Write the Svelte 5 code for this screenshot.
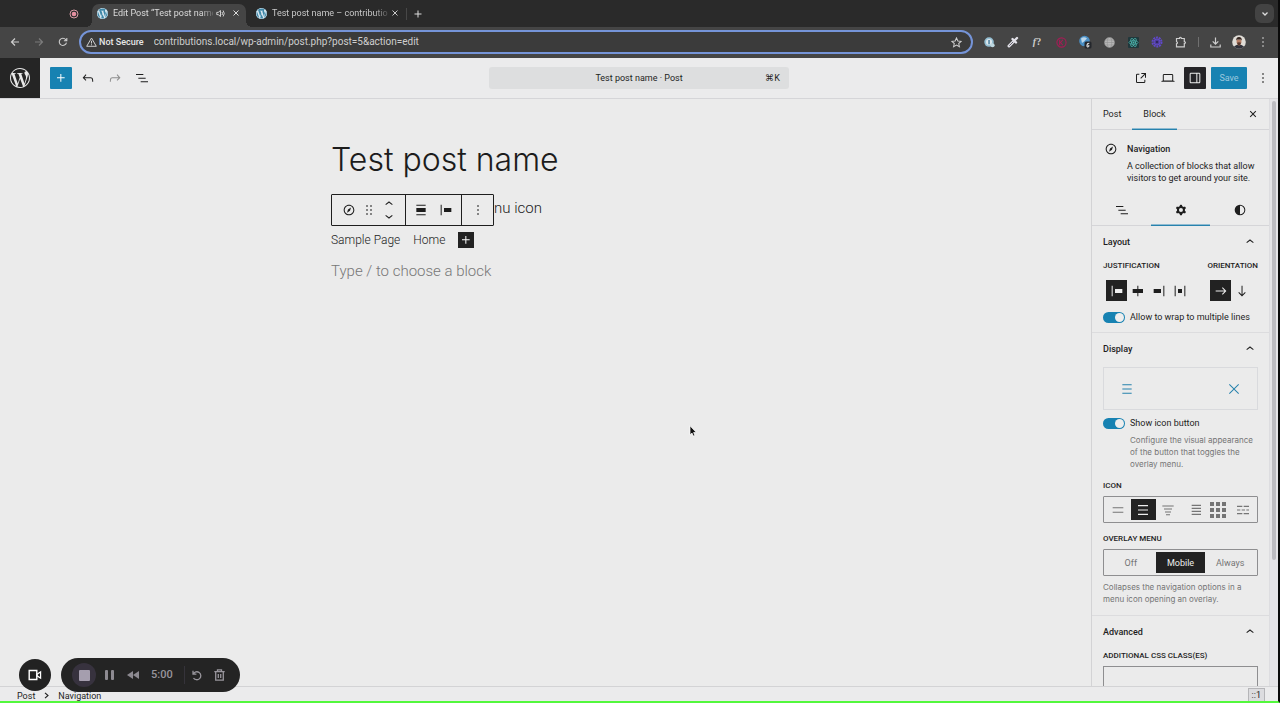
<script>
  const icons = {
    plus: 'M11 12.5V17.5H12.5V12.5H17.5V11H12.5V6H11V11H6V12.5H11Z',
    undo: 'M18.3 11.7c-.6-.6-1.4-.9-2.3-.9H6.7l2.9-3.3-1.1-1-4.5 5L8.5 16l1-1-2.7-2.7H16c.5 0 .9.2 1.3.5 1 1 1 3.4 1 4.5v.3h1.5v-.2c0-1.5 0-4.3-1.5-5.7z',
    redo: 'M15.6 6.5l-1.1 1 2.9 3.3H8c-.9 0-1.7.3-2.3.9-1.4 1.5-1.4 4.2-1.4 5.6v.2h1.5v-.3c0-1.1 0-3.5 1-4.5.3-.3.7-.5 1.3-.5h9.2L14.5 15l1.1 1.1 4.6-4.6-4.6-5z',
    list: 'M3 6h11v1.5H3V6Zm3.5 5.5h11V13h-11v-1.5ZM21 17H10v1.5h11V17Z',
    external: 'M19.5 4.5h-7V6h4.44l-5.97 5.97 1.06 1.06L18 7.06v4.44h1.5v-7Zm-13 1a2 2 0 0 0-2 2v10a2 2 0 0 0 2 2h10a2 2 0 0 0 2-2v-3H17v3a.5.5 0 0 1-.5.5h-10a.5.5 0 0 1-.5-.5v-10a.5.5 0 0 1 .5-.5h3V5.5h-3Z',
    desktop: 'M20.5 16h-.7V8c0-1.1-.9-2-2-2H6.2c-1.1 0-2 .9-2 2v8h-.7c-.8 0-1.5.7-1.5 1.5h20c0-.8-.7-1.5-1.5-1.5zM5.7 8c0-.3.2-.5.5-.5h11.6c.3 0 .5.2.5.5v7.6H5.7V8z',
    drawer: 'M18 4H6c-1.1 0-2 .9-2 2v12c0 1.1.9 2 2 2h12c1.1 0 2-.9 2-2V6c0-1.1-.9-2-2-2zm-4 14.5H6c-.3 0-.5-.2-.5-.5V6c0-.3.2-.5.5-.5h8v13zm4.5-.5c0 .3-.2.5-.5.5h-2.5v-13H18c.3 0 .5.2.5.5v12z',
    more: 'M13 19h-2v-2h2v2zm0-6h-2v-2h2v2zm0-6h-2V5h2v2z',
    navigation: 'M12 4c-4.4 0-8 3.6-8 8s3.6 8 8 8 8-3.6 8-8-3.6-8-8-8zm0 14.5c-3.6 0-6.5-2.9-6.5-6.5S8.4 5.5 12 5.5s6.5 2.9 6.5 6.5-2.9 6.5-6.5 6.5zM9 16l4.5-3L15 8.4l-4.5 3L9 16z',
    drag: 'M8 7h2V5H8v2zm0 6h2v-2H8v2zm0 6h2v-2H8v2zm6-14v2h2V5h-2zm0 8h2v-2h-2v2zm0 6h2v-2h-2v2z',
    up: 'M6.5 12.4L12 8l5.5 4.4-.9 1.2L12 10l-4.5 3.6-1-1.2z',
    down: 'M17.5 11.6L12 16l-5.5-4.4.9-1.2L12 14l4.5-3.6 1 1.2z',
    align: 'M19 5.5H5V4h14v1.5ZM19 20H5v-1.5h14V20ZM5 9h14v6H5V9Z',
    left: 'M9 9v6h11V9H9zM4 20h1.5V4H4v16z',
    center: 'M12.5 15v5H11v-5H4V9h7V4h1.5v5h7v6h-7Z',
    right: 'M4 15h11V9H4v6zM18.5 4v16H20V4h-1.5z',
    between: 'M9 15h6V9H9v6zm-5 5h1.5V4H4v16zM18.5 4v16H20V4h-1.5z',
    arrowRight: 'm14.5 6.5-1 1 3.7 3.7H4v1.6h13.2l-3.7 3.7 1 1 5.6-5.5z',
    arrowDown: 'm16.5 13.5-3.7 3.7V4h-1.5v13.2l-3.8-3.7-1 1 5.5 5.6 5.5-5.6z',
    closeSmall: 'M12 13.06l3.712 3.713 1.061-1.06L13.061 12l3.712-3.712-1.06-1.06L12 10.938 8.288 7.227l-1.061 1.06L10.939 12l-3.712 3.712 1.06 1.061L12 13.061z',
    close: 'm13.06 12 6.47-6.47-1.06-1.06L12 10.94 5.53 4.47 4.47 5.53 10.94 12l-6.47 6.47 1.06 1.06L12 13.06l6.47 6.47 1.06-1.06L13.06 12Z',
    cog: 'M10.289 4.836A1 1 0 0111.275 4h1.306a1 1 0 01.987.836l.244 1.466c.787.26 1.503.679 2.108 1.218l1.393-.522a1 1 0 011.216.437l.653 1.13a1 1 0 01-.23 1.273l-1.148.944a6.025 6.025 0 010 2.435l1.149.946a1 1 0 01.23 1.272l-.653 1.13a1 1 0 01-1.216.437l-1.394-.522c-.605.54-1.32.958-2.108 1.218l-.244 1.466a1 1 0 01-.987.836h-1.306a1 1 0 01-.986-.836l-.244-1.466a5.995 5.995 0 01-2.108-1.218l-1.394.522a1 1 0 01-1.217-.436l-.653-1.131a1 1 0 01.23-1.272l1.149-.946a6.026 6.026 0 010-2.435l-1.148-.944a1 1 0 01-.23-1.272l.653-1.131a1 1 0 011.217-.437l1.393.522a5.994 5.994 0 012.108-1.218l.244-1.466zM14.929 12a3 3 0 11-6 0 3 3 0 016 0z',
    styles: 'M20 12a8 8 0 1 1-16 0 8 8 0 0 1 16 0Zm-1.5 0a6.5 6.5 0 0 1-6.5 6.5v-13a6.5 6.5 0 0 1 6.5 6.5Z',
    menu: 'M5 5v1.5h14V5H5zm0 7.8h14v-1.5H5v1.5zM5 19h14v-1.5H5V19z',
    wordpress: 'M21.469 6.825c.84 1.537 1.318 3.3 1.318 5.175 0 3.979-2.156 7.456-5.363 9.325l3.295-9.527c.615-1.54.82-2.771.82-3.864 0-.405-.026-.78-.07-1.11m-7.981.105c.647-.03 1.232-.105 1.232-.105.582-.075.514-.93-.067-.899 0 0-1.755.135-2.88.135-1.064 0-2.85-.15-2.85-.15-.585-.03-.661.855-.075.885 0 0 .54.061 1.125.09l1.68 4.605-2.37 7.08L5.354 6.9c.649-.03 1.234-.1 1.234-.1.585-.075.516-.93-.065-.896 0 0-1.746.138-2.874.138-.2 0-.438-.008-.69-.015C4.911 3.15 8.235 1.215 12 1.215c2.809 0 5.365 1.072 7.286 2.833-.046-.003-.091-.009-.141-.009-1.06 0-1.812.923-1.812 1.914 0 .89.513 1.643 1.06 2.531.411.72.89 1.643.89 2.977 0 .915-.354 1.994-.821 3.479l-1.075 3.585-3.9-11.61.001.014zM12 22.784c-1.059 0-2.081-.153-3.048-.437l3.237-9.406 3.315 9.087c.024.053.05.101.078.149-1.12.393-2.325.609-3.582.609M1.211 12c0-1.564.336-3.05.935-4.39L7.29 21.709C3.694 19.96 1.212 16.271 1.211 12M12 0C5.385 0 0 5.385 0 12s5.385 12 12 12 12-5.385 12-12S18.615 0 12 0'
  };

  const menuIcons = [
    { name: 'Two lines', d: 'M4 8.5h16M4 15.5h16', w: 1.6 },
    { name: 'Three lines', d: 'M4.5 5.5h15M4.5 12h15M4.5 18.5h15', w: 1.7 },
    { name: 'Tapered lines', d: 'M3.5 6h17M6 10.5h12M7.5 15h9M9 19h6', w: 1.6 },
    { name: 'Four lines', d: 'M10 5h14M10 9.5h14M10 14h14M10 18.5h14', w: 2 },
    { name: 'Grid', d: 'M0 3h6M9 3h6M18 3h6M0 12h6M9 12h6M18 12h6M0 21h6M9 21h6M18 21h6', w: 6 },
    { name: 'Staggered lines', d: 'M3 6.5h8M13 6.5h8M3 12h5M10 12h5M17 12h4M3 17.5h8M13 17.5h8', w: 1.7 }
  ];
  const justifications = ['left', 'center', 'right', 'between'];
  const overlays = ['Off', 'Mobile', 'Always'];

  let justification = $state('left');
  let orientation = $state('arrowRight');
  let menuIcon = $state('Three lines');
  let overlay = $state('Mobile');
  let wrap = $state(true);
  let showIcon = $state(true);
  let url = $state('contributions.local/wp-admin/post.php?post=5&action=edit');
</script>

{#snippet icon(name, size = 16)}
  <svg width={size} height={size} viewBox="0 0 24 24" fill="currentColor" fill-rule="evenodd" aria-hidden="true"><path d={icons[name]} /></svg>
{/snippet}

{#snippet favicon()}
  <svg width="11" height="11" viewBox="0 0 24 24" aria-hidden="true"><circle cx="12" cy="12" r="12" fill="#3f88a8" /><path d={icons.wordpress} fill="#dceaf2" /></svg>
{/snippet}

<div class="window">
  <header class="tabstrip">
    <svg class="record" width="10" height="10" viewBox="0 0 10 10" aria-hidden="true"><circle cx="5" cy="5" r="4" fill="none" stroke="#d99aa6" /><circle cx="5" cy="5" r="2.300" fill="#e58fa0" /></svg>
    <div class="tab active">
      {@render favicon()}
      <span class="tab-title">Edit Post “Test post name</span>
      <button aria-label="Mute tab"><svg width="9" height="9" viewBox="0 0 12 12" fill="none" stroke="currentColor" stroke-width="1.200"><path d="M1 4.500h2L6 2v8L3 7.500H1z" /><path d="M8 4q1.500 2 0 4M9.500 2q3 4 0 8" /></svg></button>
      <button aria-label="Close tab"><svg width="6" height="6" viewBox="0 0 6 6" stroke="currentColor"><path d="M.5.500l5 5M5.500.500l-5 5" /></svg></button>
    </div>
    <div class="tab second">
      {@render favicon()}
      <span class="tab-title">Test post name – contributio</span>
      <button aria-label="Close tab"><svg width="6" height="6" viewBox="0 0 6 6" stroke="currentColor"><path d="M.5.500l5 5M5.500.500l-5 5" /></svg></button>
    </div>
    <span class="tab-sep"></span>
    <button class="new-tab" aria-label="New tab"><svg width="8" height="8" viewBox="0 0 8 8" stroke="currentColor"><path d="M4 .5v7M.5 4h7" /></svg></button>
    <button class="tab-search" aria-label="Search tabs"><svg width="8" height="8" viewBox="0 0 8 8" fill="none" stroke="currentColor" stroke-width="1.300"><path d="M1.500 2.500L4 5l2.500-2.500" /></svg></button>
  </header>

  <div class="browserbar">
    <button class="slot" aria-label="Back"><svg width="10" height="10" viewBox="0 0 10 10" fill="none" stroke="currentColor" stroke-width="1.200"><path d="M9 5H1.500M5 1.500L1.500 5 5 8.500" /></svg></button>
    <button class="slot dim" aria-label="Forward"><svg width="10" height="10" viewBox="0 0 10 10" fill="none" stroke="currentColor" stroke-width="1.200"><path d="M1 5h7.500M5 1.500L8.500 5 5 8.500" /></svg></button>
    <button class="slot" aria-label="Reload"><svg width="10" height="10" viewBox="0 0 11 11" fill="none" stroke="currentColor" stroke-width="1.200"><path d="M9.300 6.200A4 4 0 1 1 8.500 2.800L9.600 4M9.700 1v3.200H6.500" /></svg></button>
    <div class="address">
      <svg width="11" height="10" viewBox="0 0 11 10" fill="none" stroke="currentColor"><path d="M5.500 1L10.300 9.300H.7zM5.500 3.800v2.700M5.500 7.300v1" /></svg>
      <span class="insecure">Not Secure</span>
      <input aria-label="Address" bind:value={url} />
      <svg width="11" height="11" viewBox="0 0 12 12" fill="none" stroke="currentColor" stroke-width="1.100"><path d="M6 1l1.500 3.300 3.600.4-2.700 2.400.8 3.500L6 8.800l-3.200 1.800.8-3.500L.9 4.700l3.600-.4z" /></svg>
    </div>
    <button class="slot" aria-label="Password manager"><svg width="11" height="11" viewBox="0 0 12 12"><circle cx="5.500" cy="5.500" r="5.200" fill="#94bfd3" /><circle cx="5.500" cy="5.500" r="3.300" fill="#dce7ec" /><path d="M5.500 3.300v4.500" stroke="#397397" stroke-width="1.500" /><circle cx="9.300" cy="9" r="2.300" fill="#bed7df" /></svg></button>
    <button class="slot" aria-label="Color picker"><svg width="12" height="12" viewBox="0 0 12 12"><path d="M2 10l5-5" stroke="#e2e1e8" stroke-width="3" stroke-linecap="round" /><path d="M2.300 9.700l4-4" stroke="#62606a" /><path d="M5.500 3l3.500 3.500M8 4l2-2" stroke="#e2e1e8" stroke-width="2.400" stroke-linecap="round" /></svg></button>
    <button class="slot fonts" aria-label="Font finder"><i>f</i>?</button>
    <button class="slot" aria-label="Blocker"><svg width="11" height="11" viewBox="0 0 12 12" fill="none" stroke="#a41c55" stroke-width="1.200"><circle cx="6" cy="6" r="5" /><path d="M4 3v6M7.500 3L5 6l2.500 3" /></svg></button>
    <button class="slot" aria-label="Notifications"><svg width="14" height="14" viewBox="0 0 14 14"><circle cx="6.500" cy="6" r="5.300" fill="#4a8fc5" /><path d="M3 3.500Q6 1 9 3.500L6 6.500 4 8z" fill="#bcd6e9" /><rect x="6.500" y="6.500" width="7" height="7" rx="1.500" fill="#24272c" /><path d="M11.300 8.300q-2.400-.6-2.400 2t1.200 1.700 1.200-1.200-2.200-.9" fill="none" stroke="#fff" stroke-width=".9" /></svg></button>
    <button class="slot" aria-label="Globe"><svg width="11" height="11" viewBox="0 0 12 12" fill="none" stroke="#8d8d8d" stroke-width=".6"><circle cx="6" cy="6" r="5.500" fill="#b8b8b8" /><ellipse cx="6" cy="6" rx="2.500" ry="5.500" /><path d="M.5 6h11M1.500 3.300h9M1.500 8.700h9" /></svg></button>
    <button class="slot" aria-label="React tools"><svg width="11" height="11" viewBox="0 0 12 12" fill="none" stroke="#4cb5ad" stroke-width=".8"><rect width="12" height="12" rx="1" fill="#20383c" stroke="none" /><ellipse cx="6" cy="6" rx="5" ry="2" /><ellipse cx="6" cy="6" rx="5" ry="2" transform="rotate(60 6 6)" /><ellipse cx="6" cy="6" rx="5" ry="2" transform="rotate(120 6 6)" /><circle cx="6" cy="6" r=".7" fill="#4cb5ad" /></svg></button>
    <button class="slot" aria-label="Gear"><svg width="12" height="12" viewBox="0 0 12 12" fill="none" stroke="#6048c8"><circle cx="6" cy="6" r="4.500" stroke-width="2" stroke-dasharray="2 .800" /><circle cx="6" cy="6" r="3" fill="#5240a0" /><circle cx="6" cy="6" r="1.300" fill="#30275e" stroke="none" /></svg></button>
    <button class="slot" aria-label="Extensions"><svg width="12" height="12" viewBox="0 0 12 12" fill="none" stroke="currentColor" stroke-width="1.200"><path d="M1.500 2.500h3v-.6q.9-1.300 1.800 0v.6h3v3.200h.5q1.300.9 0 1.800h-.5v3.300H1.500V7.700q2-.9 0-2.300z" /></svg></button>
    <span class="bar-sep"></span>
    <button class="slot" aria-label="Downloads"><svg width="11" height="11" viewBox="0 0 11 11" fill="none" stroke="currentColor" stroke-width="1.200"><path d="M5.500.500v6.500M2.700 4.300l2.800 2.800 2.800-2.800M.8 7.500V10h9.400V7.500" /></svg></button>
    <button class="slot" aria-label="Profile"><svg width="14" height="14" viewBox="0 0 14 14"><circle cx="7" cy="7" r="6.800" fill="#dfdcd6" /><path d="M2 11.500Q7 7.500 12 11.500A6.800 6.800 0 0 1 2 11.500" fill="#30313a" /><path d="M4.600 4.500h4.800v3Q8.500 10.500 7 10.500T4.600 7.500z" fill="#b77f66" /><path d="M4.200 5.500Q4 2 7 2t2.800 3.500L9 4.500H5z" fill="#33251f" /><path d="M5 7.800q2-1 4 0-.5 2.500-2 2.500t-2-2.500" fill="#56382d" /></svg></button>
    <button class="slot" aria-label="Browser menu">{@render icon('more', 16)}</button>
  </div>

  <div class="editor-header">
    <a class="wp-logo" href="#home" aria-label="View posts">{@render icon('wordpress', 20)}</a>
    <div class="tools">
      <button class="tool primary" aria-label="Block inserter">{@render icon('plus')}</button>
      <button class="tool" aria-label="Undo">{@render icon('undo')}</button>
      <button class="tool dim" aria-label="Redo">{@render icon('redo')}</button>
      <button class="tool" aria-label="Document overview">{@render icon('list')}</button>
    </div>
    <button class="command"><span>Test post name · Post</span><kbd>⌘K</kbd></button>
    <div class="tools end">
      <button class="tool" aria-label="View post">{@render icon('external')}</button>
      <button class="tool" aria-label="Preview">{@render icon('desktop')}</button>
      <button class="tool dark" aria-label="Settings">{@render icon('drawer')}</button>
      <button class="save">Save</button>
      <button class="tool" aria-label="Options">{@render icon('more')}</button>
    </div>
  </div>

  <div class="body">
    <main>
      <article>
        <h1>Test post name</h1>
        <div class="para-row">
          <div class="block-toolbar" role="toolbar" aria-label="Block tools">
            <div class="group">
              <button aria-label="Navigation">{@render icon('navigation')}</button>
              <button aria-label="Drag">{@render icon('drag')}</button>
              <span class="movers">
                <button aria-label="Move up">{@render icon('up')}</button>
                <button aria-label="Move down">{@render icon('down')}</button>
              </span>
            </div>
            <div class="group two">
              <button aria-label="Align">{@render icon('align')}</button>
              <button aria-label="Justify items">{@render icon('left')}</button>
            </div>
            <div class="group one"><button aria-label="Options">{@render icon('more')}</button></div>
          </div>
          <p>nu icon</p>
        </div>
        <nav>
          <a href="#sample">Sample Page</a>
          <a href="#home">Home</a>
          <button aria-label="Add block">{@render icon('plus')}</button>
        </nav>
        <p class="placeholder">Type / to choose a block</p>
      </article>
      <svg class="cursor" width="8" height="12" viewBox="0 0 8 12" aria-hidden="true"><path d="M1 .8v9l2-1.700 1.400 3 1.500-.7L4.600 7.500H7.300z" fill="#111" stroke="#fff" stroke-width=".7" /></svg>
    </main>

    <aside>
      <div class="sidebar">
        <div class="side-tabs">
          <button>Post</button>
          <button class="current">Block</button>
          <button class="side-close" aria-label="Close settings">{@render icon('closeSmall')}</button>
        </div>
        <div class="card">
          {@render icon('navigation')}
          <div>
            <h2>Navigation</h2>
            <p>A collection of blocks that allow visitors to get around your site.</p>
          </div>
        </div>
        <div class="view-tabs">
          <button aria-label="List view">{@render icon('list')}</button>
          <button class="current" aria-label="Settings">{@render icon('cog')}</button>
          <button aria-label="Styles">{@render icon('styles')}</button>
        </div>

        <section>
          <h2><button class="panel-title">Layout {@render icon('up')}</button></h2>
          <div class="split">
            <fieldset>
              <legend>Justification</legend>
              <div class="choices">
                {#each justifications as j}
                  <button class:picked={justification === j} aria-label={j} onclick={() => (justification = j)}>{@render icon(j)}</button>
                {/each}
              </div>
            </fieldset>
            <fieldset>
              <legend>Orientation</legend>
              <div class="choices">
                {#each ['arrowRight', 'arrowDown'] as o}
                  <button class:picked={orientation === o} aria-label={o} onclick={() => (orientation = o)}>{@render icon(o)}</button>
                {/each}
              </div>
            </fieldset>
          </div>
          <label class="toggle"><input type="checkbox" bind:checked={wrap} />Allow to wrap to multiple lines</label>
        </section>

        <section>
          <h2><button class="panel-title">Display {@render icon('up')}</button></h2>
          <button class="preview" aria-label="Overlay menu controls">{@render icon('menu')}{@render icon('close')}</button>
          <label class="toggle"><input type="checkbox" bind:checked={showIcon} />Show icon button</label>
          <p class="help indent">Configure the visual appearance of the button that toggles the overlay menu.</p>
          <fieldset class="stack">
            <legend>Icon</legend>
            <div class="segments">
              {#each menuIcons as m}
                <button class:picked={menuIcon === m.name} aria-label={m.name} onclick={() => (menuIcon = m.name)}>
                  <svg width="16" height="16" viewBox="0 0 24 24" stroke="currentColor" stroke-width={m.w} overflow="visible"><path d={m.d} /></svg>
                </button>
              {/each}
            </div>
          </fieldset>
          <fieldset class="stack">
            <legend>Overlay Menu</legend>
            <div class="segments">
              {#each overlays as o}
                <button class:picked={overlay === o} onclick={() => (overlay = o)}>{o}</button>
              {/each}
            </div>
          </fieldset>
          <p class="help">Collapses the navigation options in a menu icon opening an overlay.</p>
        </section>

        <section>
          <h2><button class="panel-title">Advanced {@render icon('up')}</button></h2>
          <label class="field" for="css-classes">Additional CSS class(es)</label>
          <input id="css-classes" class="text" type="text" />
        </section>
      </div>
      <div class="scrollbar"><span></span></div>
    </aside>
  </div>

  <footer>
    <a href="#post">Post</a>
    <svg width="5" height="7" viewBox="0 0 5 7" fill="none" stroke="#1e1e1e" stroke-width="1.100"><path d="M1 .8L4 3.500 1 6.200" /></svg>
    <a href="#navigation">Navigation</a>
    <span class="status">::1</span>
  </footer>

  <div class="recorder">
    <button class="camera" aria-label="Camera"><svg width="14" height="12" viewBox="0 0 14 12" fill="none" stroke="#fff" stroke-width="1.400"><path d="M1.200 1.500h7.600v9H1.200z" /><path d="M9 5.200l3.600-2.300v6.200L9 6.800z" stroke-width="1.200" /></svg></button>
    <div class="pill">
      <button class="stop" aria-label="Stop"><svg width="11" height="11"><rect width="11" height="11" rx="1" fill="#a59eae" /></svg></button>
      <button class="transport" aria-label="Pause"><svg width="9" height="10" fill="#8d8a91"><rect width="3" height="10" rx="1" /><rect x="6" width="3" height="10" rx="1" /></svg></button>
      <button class="transport" aria-label="Rewind"><svg width="12" height="8" viewBox="0 0 12 8" fill="#8d8a91"><path d="M6 0v8L0 4zM12 0v8L6 4z" /></svg></button>
      <time>5:00</time>
      <span class="pill-sep"></span>
      <button aria-label="Restart"><svg width="10" height="11" viewBox="0 0 10 11" fill="none" stroke="#98959c" stroke-width="1.300"><path d="M1 .8v3.400h3.400M1.200 4A4 4 0 1 1 1.500 8" /></svg></button>
      <button aria-label="Delete"><svg width="11" height="12" viewBox="0 0 11 12" fill="none" stroke="#98959c" stroke-width="1.300"><path d="M.3 2.700h10.400M3.500 2.500V.8h4v1.700M1.700 3v8.200h7.600V3M4.300 5v4M6.700 5v4" /></svg></button>
    </div>
  </div>
</div>

<style>
  :global(body) { margin: 0; background: #ebebeb; }
  * { box-sizing: border-box; }
  button, input { font: inherit; color: inherit; }
  button { display: inline-flex; align-items: center; justify-content: center; padding: 0; border: 0; background: none; }
  svg { display: block; flex: none; }
  a { color: inherit; text-decoration: none; }
  h1, h2, p, fieldset { margin: 0; padding: 0; border: 0; }
  .window {
    position: relative; display: flex; flex-direction: column; height: 100vh; overflow: hidden;
    background: #ebebeb; color: #1e1e1e; font: 9px/12px Roboto, "Liberation Sans", sans-serif;
    border-right: 2px solid #0a0a0a; border-bottom: 2px solid #52f83c;
  }

  .tabstrip { display: flex; align-items: center; flex: none; height: 27px; padding-right: 4px; background: #2a2a2a; color: #dcdcdc; }
  .record { margin: 0 13px 0 69px; }
  .tab { display: flex; align-items: center; height: 23px; margin-top: 4px; padding: 0 4px 5px 5px; width: 154px; }
  .tab.active { position: relative; background: #454545; border-radius: 7px 7px 0 0; }
  .tab.active::before, .tab.active::after { content: ""; position: absolute; bottom: 0; width: 6px; height: 6px; }
  .tab.active::before { left: -6px; background: radial-gradient(circle at 0 0, transparent 6px, #454545 6px); }
  .tab.active::after { right: -6px; background: radial-gradient(circle at 100% 0, transparent 6px, #454545 6px); }
  .tab.second { margin-left: 5px; color: #c8c8c8; }
  .tab-title { flex: 1; min-width: 0; margin: 0 1px 0 5px; white-space: nowrap; mask-image: linear-gradient(90deg, #000 88%, rgb(0 0 0 / 20%)); }
  .tab button { width: 12px; }
  .tab button + button { margin-left: 4px; }
  .tab-sep { width: 1px; height: 12px; margin: 0 5px 0 1px; background: #474747; }
  .new-tab { width: 11px; height: 16px; }
  .tab-search { width: 19px; height: 19px; margin-left: auto; border-radius: 6px; background: #434343; }

  .browserbar { display: flex; align-items: center; flex: none; height: 31px; padding: 0 3px 1px; background: #454545; color: #cecece; }
  .slot { flex: none; width: 24px; height: 24px; }
  .browserbar .dim { color: #7b7b7b; }
  .address { display: flex; align-items: center; flex: 1; min-width: 0; height: 24px; margin: 0 4px; padding: 0 9px 0 5px; border: 2px solid #7594d8; border-radius: 12px; background: #3b3b3b; }
  .insecure { margin: 0 10px 0 2px; color: #e6e6e6; font-weight: 500; }
  .address input { flex: 1; min-width: 0; padding: 0; border: 0; outline: 0; background: none; font-size: 10px; }
  .fonts { font: bold 10px/12px "Liberation Serif", serif; }
  .bar-sep { width: 1px; height: 10px; margin: 0 4px 0 5px; background: #707070; }

  .editor-header { display: grid; grid-template-columns: 40px 1fr 300px 1fr; align-items: center; flex: none; height: 41px; border-bottom: 1px solid #d5d5d8; background: #ebebec; }
  .wp-logo { display: grid; place-items: center; height: 40px; background: #252525; color: #e8e8e8; }
  .tools { display: flex; align-items: center; padding-left: 10px; gap: 5px; }
  .tools.end { justify-content: flex-end; padding: 0 4px 0 0; }
  .tool { width: 22px; height: 22px; border-radius: 1px; }
  .tool.primary { background: #1782b2; color: #fff; }
  .tool.dim { color: #8d8d8d; }
  .tool.dark { background: #252428; color: #eee; }
  .save { width: 36px; height: 22px; border-radius: 1px; background: #1782b2; color: #9bc8de; }
  .command { position: relative; height: 22px; border-radius: 3px; background: #dddedf; }
  .editor-header .command { margin-left: -20px; margin-right: 20px; width: 300px; }
  kbd { position: absolute; right: 9px; font-family: inherit; }

  .body { display: flex; flex: 1; min-height: 0; }
  main { position: relative; flex: 1; min-width: 0; padding: 0 12px; }
  article { max-width: 429px; margin: 0 auto; padding-top: 41px; color: #1c1c1c; font-weight: 300; }
  h1 { font-family: Inter, sans-serif; font-size: 32px; line-height: 40px; font-weight: 300; }
  .para-row { display: flex; align-items: center; margin-top: 14px; font-size: 15px; line-height: 20px; }
  .para-row p { padding-bottom: 4px; }
  .block-toolbar { display: flex; width: 163px; height: 32px; border: 1px solid #1e1e1e; border-radius: 1px; }
  .group { display: flex; align-items: center; justify-content: center; width: 73px; gap: 4px; }
  .group + .group { border-left: 1px solid #1e1e1e; }
  .group.two { width: 56px; gap: 9px; }
  .group.one { width: 32px; }
  .movers { display: flex; flex-direction: column; width: 16px; align-items: center; }
  .movers button { height: 12px; overflow: hidden; }
  nav { display: flex; align-items: center; gap: 13px; margin-top: 5px; font-size: 12px; line-height: 18px; }
  nav button { width: 16px; height: 16px; background: #222; color: #fff; }
  .placeholder { margin-top: 12px; color: #777; font-size: 15px; line-height: 20px; }
  .cursor { position: absolute; left: 689px; top: 326px; }

  aside { display: flex; flex: none; width: 187px; border-left: 1px solid #d3d3d5; }
  .sidebar { width: 177px; overflow: hidden; }
  .scrollbar { flex: 1; padding: 2px 2px 0; border-left: 1px solid #dddde0; background: #e5e4e7; }
  .scrollbar span { display: block; height: 459px; border-radius: 3px; background: #bdbcc1; }
  .side-tabs { display: flex; height: 31px; border-bottom: 1px solid #d5d5d8; }
  .side-tabs button { padding: 0 11px; }
  .current { box-shadow: inset 0 -1px #8fbbd1, 0 1px #2782ad; }
  .side-tabs .side-close { margin-left: auto; padding: 0 8px; }
  .card { display: flex; gap: 8px; padding: 11px 10px 0 11px; height: 65px; }
  .card > div { padding-top: 2px; }
  h2 { font-size: 9px; line-height: 12px; font-weight: 500; }
  .card p { margin-top: 5px; width: 134px; }
  .view-tabs { display: flex; height: 31px; border-bottom: 1px solid #d5d5d8; }
  .view-tabs button { flex: 1; }
  section { padding: 0 11px; border-bottom: 1px solid #dcdcde; }
  section:last-child { border: 0; }
  .panel-title { justify-content: space-between; width: 100%; height: 32px; }
  legend, .field { display: block; padding: 0; font-size: 8px; line-height: 12px; font-weight: 500; text-transform: uppercase; }
  .split { display: flex; justify-content: space-between; margin-top: 2px; }
  .choices { display: flex; margin: 8px 0 0 3px; }
  .choices button { width: 21px; height: 21px; }
  .picked { background: #222; color: #eee; }
  .toggle { display: flex; align-items: center; gap: 5px; height: 12px; }
  .split + .toggle { margin: 10px 0 9px; }
  .toggle input { appearance: none; position: relative; width: 22px; height: 11px; margin: 0; border-radius: 6px; background: #999; }
  .toggle input:checked { background: #1782b2; }
  .toggle input::after { content: ""; position: absolute; left: 2px; top: 1px; width: 9px; height: 9px; border-radius: 50%; background: #eee; }
  .toggle input:checked::after { left: 12px; }
  .preview { justify-content: space-between; width: 100%; height: 43px; margin: 2px 0 7px; padding: 0 15px; border: 1px solid #d9dadd; color: #2782ad; }
  .help { color: #757575; font-family: Inter, sans-serif; font-size: 8px; line-height: 12px; }
  .help.indent { margin: 5px 0 0 27px; }
  .stack { margin-top: 10px; }
  .segments { display: flex; height: 27px; margin-top: 4px; padding: 2px; border: 1px solid #8e8e90; border-radius: 1px; color: #757575; }
  .segments button { flex: 1; }
  .segments .picked { color: #eee; }
  .stack + .help { margin: 5px 0 10px; }
  .field { margin-top: 2px; }
  .text { width: 100%; height: 26px; margin-top: 4px; border: 1px solid #8e8e90; background: none; }

  footer { display: flex; align-items: center; flex: none; gap: 9px; height: 15px; padding: 3px 13px 0 17px; border-top: 1px solid #d3d3d5; background: #ebebec; }
  .status { margin: -2px 0 0 auto; padding: 0 3px; border: 1px solid #b5b5b8; background: #dcdcdf; line-height: 12px; }

  .recorder { position: absolute; left: 19px; bottom: 9px; display: flex; align-items: center; gap: 10px; }
  .camera { width: 32px; height: 32px; border-radius: 50%; background: #222; }
  .pill { display: flex; align-items: center; width: 179px; height: 34px; padding: 0 10px 0 11px; border-radius: 17px; background: #242424; color: #98959c; }
  .pill button { flex: none; width: 22px; height: 24px; }
  .pill .stop { width: 24px; border-radius: 50%; background: #37323e; }
  .pill .transport { margin-left: 2px; }
  .pill time { margin-left: 7px; font-size: 11px; font-weight: 500; }
  .pill-sep { width: 1px; height: 18px; margin: 0 1px 0 auto; background: #35333a; }
</style>
